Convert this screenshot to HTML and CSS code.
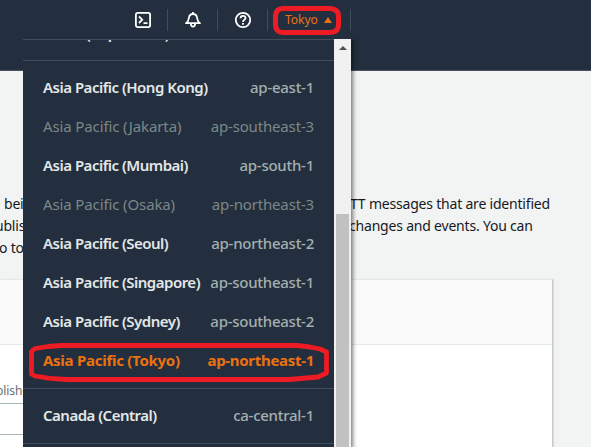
FILE: index.html
```html
<!DOCTYPE html>
<html lang="en">
<head>
<meta charset="utf-8">
<title>Region selector</title>
<link rel="stylesheet" href="styles.css">
</head>
<body>
<header class="topbar">
  <div class="tool">
    <svg width="18" height="18" viewBox="0 0 18 18" fill="none" stroke="#fff" stroke-width="1.8"><rect x="1.9" y="1.9" width="14.2" height="14.2" rx="1.8"/><path d="M5 5.500 8.200 8.700 5 12M9.500 12.200h4"/></svg>
  </div>
  <div class="tool">
    <svg width="18" height="18" viewBox="0 0 18 18" fill="none" stroke="#fff" stroke-width="1.8" stroke-linejoin="round"><path d="M2 12.2c2.200-1.400 2.600-3 2.900-5.200C5.200 4.400 6.600 3 9 3s3.800 1.400 4.100 4c.3 2.200.7 3.800 2.900 5.200zM9 1v2M6.900 12.800c.1 3.800 4.100 3.800 4.200 0"/></svg>
  </div>
  <div class="tool">
    <svg width="18" height="18" viewBox="0 0 18 18" fill="none" stroke="#fff" stroke-width="1.8"><circle cx="9" cy="9" r="7.200"/><path d="M6.500 7.200c0-3.200 5-3.100 5-.3 0 1.800-2.500 1.800-2.500 4M9 12v1.800"/></svg>
  </div>
  <div class="region">Tokyo<i class="caret"></i></div>
</header>
<main class="page">
  <div class="intro">
    <p class="line line-a"><span>being</span><span>TT messages that are identified</span></p>
    <p class="line line-b"><span>ublish</span><span>changes and events. You can</span></p>
    <p class="line line-c"><span>o to to</span></p>
  </div>
  <section class="card">
    <div class="card-head"></div>
    <div class="card-body">
      <label class="hint">blished</label>
      <div class="field"></div>
    </div>
  </section>
</main>
<nav class="menu">
  <div class="list">
    <div class="group group-cut"><div class="row"><b>Africa (Cape Town)</b><span>af-south-1</span></div></div>
    <div class="group">
      <div class="row"><b>Asia Pacific (Hong Kong)</b><span>ap-east-1</span></div>
      <div class="row off"><b>Asia Pacific (Jakarta)</b><span>ap-southeast-3</span></div>
      <div class="row"><b>Asia Pacific (Mumbai)</b><span>ap-south-1</span></div>
      <div class="row off"><b>Asia Pacific (Osaka)</b><span>ap-northeast-3</span></div>
      <div class="row"><b>Asia Pacific (Seoul)</b><span>ap-northeast-2</span></div>
      <div class="row"><b>Asia Pacific (Singapore)</b><span>ap-southeast-1</span></div>
      <div class="row"><b>Asia Pacific (Sydney)</b><span>ap-southeast-2</span></div>
      <div class="row current"><b>Asia Pacific (Tokyo)</b><span>ap-northeast-1</span></div>
    </div>
    <div class="group"><div class="row"><b>Canada (Central)</b><span>ca-central-1</span></div></div>
  </div>
  <div class="scrollbar"><i class="up"></i><i class="thumb"></i></div>
</nav>
<svg class="marks" width="591" height="447" viewBox="0 0 591 447" fill="none" stroke="#ed1c24" stroke-linejoin="round">
  <path stroke-width="5" d="M283 8.500h46q9.500 0 9.500 8v8q0 8-9.500 8h-46q-7.500 0-7.500-8v-8q0-8 7.500-8z"/>
  <path stroke-width="4.800" d="M61 345.500H297L310 347 320 349 326.500 352V373L318 377 289 379.500H67L50 378.300 35 376 31.500 374V351.500L35 348.500 48 346.500z"/>
</svg>
</body>
</html>
```

FILE: styles.css
```css
* { box-sizing: border-box; }
body {
  margin: 0;
  width: 591px;
  height: 447px;
  overflow: hidden;
  position: relative;
  background: #f2f3f3;
  font-family: "Noto Sans", "Open Sans", sans-serif;
  font-size: 14px;
  color: #16191f;
}
p { margin: 0; }

.topbar {
  height: 71px;
  padding: 9px 0 0 118px;
  display: flex;
  align-items: flex-start;
  background: #232f3e;
  border-bottom: 1px solid #4b5361;
}
.tool {
  width: 50px;
  height: 22px;
  display: flex;
  align-items: center;
  justify-content: center;
  border-right: 1px solid #414d5c;
}
.tool svg { flex: none; }
.region {
  width: 83px;
  height: 22px;
  padding: 0 0 1px 17px;
  display: flex;
  align-items: center;
  border-right: 1px solid #414d5c;
  color: #ec7211;
  font-size: 12px;
  letter-spacing: 0;
}
.caret {
  margin-left: 6px;
  border: 4px solid transparent;
  border-top: 0;
  border-bottom: 6px solid #ec7211;
}

.intro { padding-top: 122px; }
.line {
  height: 22px;
  line-height: 22px;
  display: flex;
  white-space: pre;
  letter-spacing: -0.2px;
}
.line span:first-child { width: 350px; flex: none; }
.line-a span:first-child { padding-left: 4px; }
.line-b span:first-child { margin-left: -5px; width: 354px; }
.line-c span:first-child { margin-left: -1px; }

.card {
  width: 553px;
  height: 168px;
  margin-top: 20px;
  background: #fff;
  border-top: 1px solid #e6e9e9;
  border-right: 1px solid #c5c9c9;
  box-shadow: 1px 0 1px #dde0e0;
}
.card-head {
  height: 65px;
  background: #fafafa;
  border-bottom: 1px solid #e6eaea;
}
.card-body { padding-top: 37px; }
.hint {
  display: block;
  height: 21px;
  margin-left: -4px;
  line-height: 18px;
  font-size: 12px;
  letter-spacing: -0.1px;
  color: #687078;
}
.field {
  width: 300px;
  height: 32px;
  border: 1px solid #aab7b8;
  border-left: 0;
}

.menu {
  position: absolute;
  left: 23px;
  top: 39px;
  width: 328px;
  height: 408px;
  display: flex;
  background: #232f3e;
  box-shadow: 1px 1px 4px 1px rgba(0, 0, 0, .5);
  clip-path: inset(0 -10px 0 0);
}
.list {
  flex: 1;
  overflow: hidden;
  border-top: 1px solid #414d5c;
}
.group {
  padding: 6px 0 9px;
  border-bottom: 1px solid #414d5c;
}
.group-cut { height: 54px; margin-top: -33px; padding-top: 6px; }
.row {
  height: 39px;
  padding: 0 20px;
  display: flex;
  align-items: center;
  justify-content: space-between;
  white-space: nowrap;
  color: #a3afb1;
  font-size: 15px;
  font-weight: 500;
  letter-spacing: -0.26px;
}
.row b { color: #e3e7e8; font-weight: 600; letter-spacing: -0.5px; }
.off { font-weight: 400; color: #7b8788; letter-spacing: -0.16px; }
.off b { color: #7b8788; font-weight: 400; letter-spacing: -0.12px; }
.current { color: #ec7211; font-weight: 700; letter-spacing: -0.3px; }
.current b { color: #ec7211; font-weight: 700; letter-spacing: -0.27px; }
.scrollbar {
  width: 17px;
  background: #f1f1f1;
  display: flex;
  flex-direction: column;
  align-items: center;
}
.up {
  margin-top: 7px;
  border: 4px solid transparent;
  border-top: 0;
  border-bottom: 4px solid #505050;
}
.thumb {
  width: 13px;
  height: 233px;
  margin-top: 164px;
  background: #c1c1c1;
}
.marks { position: absolute; left: 0; top: 0; }
```
